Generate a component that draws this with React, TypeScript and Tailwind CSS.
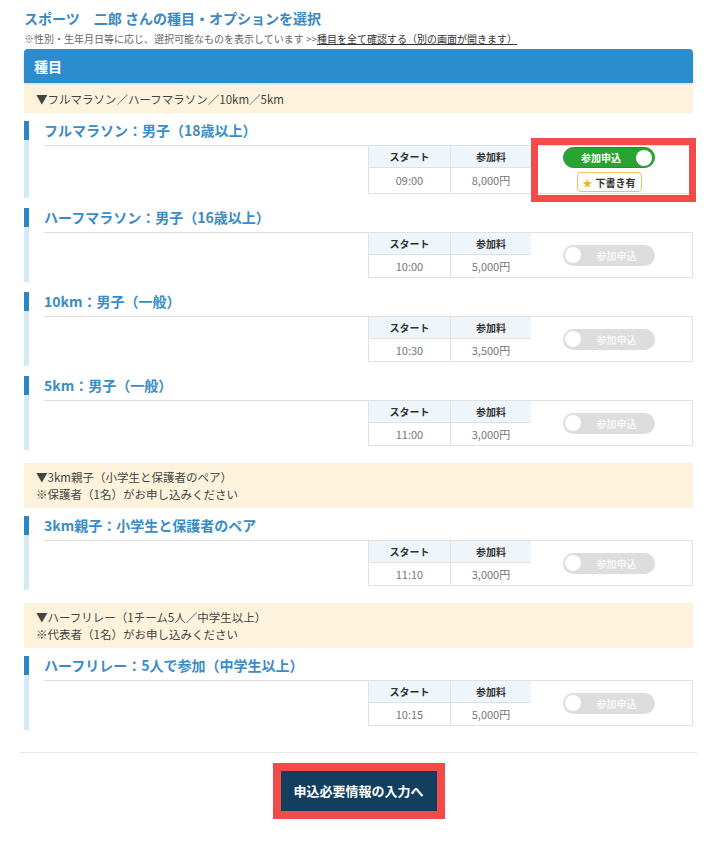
import React from "react";

type Item = {
  title: string;
  start: string;
  fee: string;
  active?: boolean;
};

type Group = {
  lines: string[];
  items: Item[];
};

const groups: Group[] = [
  {
    lines: ["▼フルマラソン／ハーフマラソン／10km／5km"],
    items: [
      { title: "フルマラソン：男子（18歳以上）", start: "09:00", fee: "8,000円", active: true },
      { title: "ハーフマラソン：男子（16歳以上）", start: "10:00", fee: "5,000円" },
      { title: "10km：男子（一般）", start: "10:30", fee: "3,500円" },
      { title: "5km：男子（一般）", start: "11:00", fee: "3,000円" },
    ],
  },
  {
    lines: ["▼3km親子（小学生と保護者のペア）", "※保護者（1名）がお申し込みください"],
    items: [{ title: "3km親子：小学生と保護者のペア", start: "11:10", fee: "3,000円" }],
  },
  {
    lines: ["▼ハーフリレー（1チーム5人／中学生以上）", "※代表者（1名）がお申し込みください"],
    items: [{ title: "ハーフリレー：5人で参加（中学生以上）", start: "10:15", fee: "5,000円" }],
  },
];

function Toggle({ on }: { on?: boolean }) {
  if (on) {
    return (
      <div className="relative flex h-[21px] w-[92px] shrink-0 items-center rounded-full border border-[#23922b] bg-[#2ba334] pr-[20px] pl-[4px]">
        <span className="flex-1 text-center text-[10px] leading-[19px] font-bold text-white">参加申込</span>
        <span className="absolute top-[1.5px] right-[2px] h-[16px] w-[16px] rounded-full bg-white" />
      </div>
    );
  }
  return (
    <div className="relative flex h-[21px] w-[92px] items-center rounded-full bg-[#dddddd] pr-[4px] pl-[20px]">
      <span className="absolute top-[2.5px] left-[2px] h-[16px] w-[16px] rounded-full bg-white" />
      <span className="flex-1 text-center text-[10px] leading-[21px] font-bold text-[#f7f7f7]">参加申込</span>
    </div>
  );
}

function EventRow({ item, first }: { item: Item; first: boolean }) {
  const tall = !!item.active;
  return (
    <div className={`${first ? "mt-[8px]" : "mt-[10px]"} border-l-[5px] border-[#d4e9f6] pb-[4px]`}>
      <div className="-ml-[5px] h-[19px] border-l-[5px] border-[#2d86c4] pl-[15px] text-[14px] leading-[19px] font-bold text-[#3a8cc5]">
        {item.title}
      </div>
      <div className={`mt-[5px] flex pl-[15px] ${tall ? "h-[49px]" : "h-[46px]"}`}>
        <div className="flex-1 border-t border-[#dddddd]" />
        <div className="flex border-t border-b border-l border-[#e2e2e2] text-center">
          <div className="flex w-[82px] flex-col border-r border-[#e2e2e2]">
            <div className="flex h-[22px] items-center justify-center border-b border-[#e2e2e2] bg-[#eef6fc] text-[10px] font-bold text-[#333]">スタート</div>
            <div className="flex flex-1 items-center justify-center text-[11px] text-[#777]">{item.start}</div>
          </div>
          <div className="flex w-[80px] flex-col">
            <div className="flex h-[22px] items-center justify-center border-b border-[#e2e2e2] bg-[#eef6fc] text-[10px] font-bold text-[#333]">参加料</div>
            <div className="flex flex-1 items-center justify-center text-[11px] text-[#777]">{item.fee}</div>
          </div>
        </div>
        {tall ? (
          <div className="relative flex w-[162px] flex-col items-center border border-[#e2e2e2] pt-[1px] pr-[6px]">
            <Toggle on />
            <div className="mt-[4px] flex h-[20px] items-center gap-[3px] rounded-[4px] border border-[#e9c560] bg-white px-[5px] text-[10px] font-bold text-[#333]">
              <span className="text-[10px] text-[#f1b719]">★</span>
              下書き有
            </div>
            <div className="absolute -top-[8px] -right-[4px] -bottom-[9px] -left-[1px] border-[7px] border-[#f34a4a]" />
          </div>
        ) : (
          <div className="flex w-[162px] items-center justify-center border border-l-0 border-[#e2e2e2] pr-[6px]">
            <Toggle />
          </div>
        )}
      </div>
    </div>
  );
}

export default function App() {
  return (
    <div className="min-h-[845px] w-[717px] bg-white font-['Noto_Sans_CJK_JP','Noto_Sans',sans-serif] text-[#333]">
      <div className="px-[24px] pt-[8px] pb-[24px]">
        <h1 className="h-[20px] text-[14px] leading-[20px] font-bold text-[#3a88c1]">スポーツ　二郎 さんの種目・オプションを選択</h1>
        <p className="mt-[4px] h-[14px] text-[10px] leading-[14px] text-[#666]">
          ※性別・生年月日等に応じ、選択可能なものを表示しています &gt;&gt;
          <span className="text-[#333] underline">種目を全て確認する（別の画面が開きます）</span>
        </p>
        <div className="mt-[3px] flex h-[34px] items-center rounded-t-[4px] bg-[#2c8dce] px-[10px] text-[14px] font-bold text-white shadow-[0_2px_3px_rgba(0,0,0,0.15)]">
          種目
        </div>
        {groups.map((g, gi) => (
          <div key={gi} className={gi === 0 ? "mt-[2px]" : "mt-[13px]"}>
            <div className="flex flex-col justify-center bg-[#fdf3dc] px-[12px] py-[5.5px] text-[11.5px] leading-[17px] text-[#444]">
              {g.lines.map((l) => (
                <div key={l}>{l}</div>
              ))}
            </div>
            {g.items.map((it, ii) => (
              <EventRow key={it.title} item={it} first={ii === 0} />
            ))}
          </div>
        ))}
        <div className="-mx-[4px] mt-[22px] border-t border-[#e6e6e6]" />
        <div className="mt-[10px] flex justify-center">
          <div className="border-[8px] border-[#f34a4a]">
            <div className="flex h-[40px] w-[156px] items-center justify-center bg-[#133f5f] text-[13px] font-bold text-white">
              申込必要情報の入力へ
            </div>
          </div>
        </div>
      </div>
    </div>
  );
}
